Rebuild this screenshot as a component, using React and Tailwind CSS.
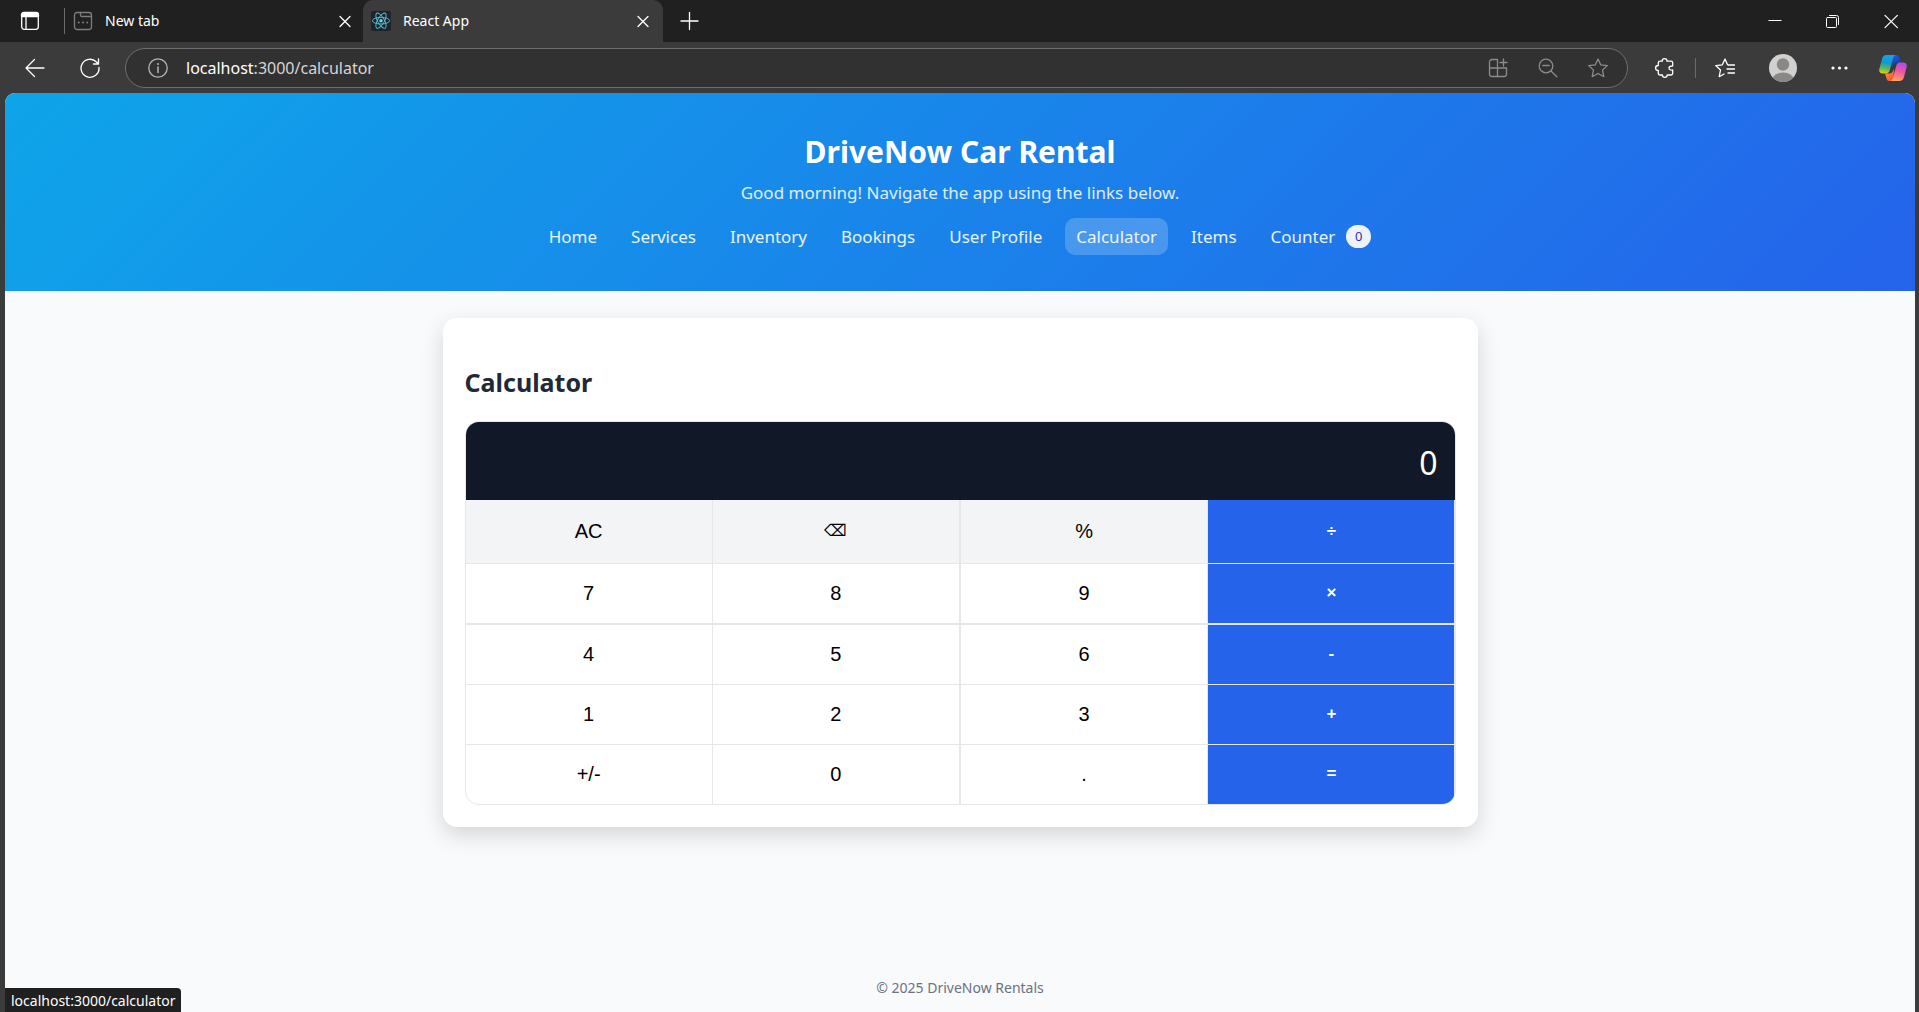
import React from "react";

const ui = "font-['Noto_Sans','Open_Sans',sans-serif]";

function Svg({ size = 20, children, className = "", ...rest }) {
  return (
    <svg
      width={size}
      height={size}
      viewBox="0 0 20 20"
      fill="none"
      stroke="currentColor"
      strokeWidth="1.3"
      strokeLinecap="round"
      strokeLinejoin="round"
      className={className}
      aria-hidden="true"
      {...rest}
    >
      {children}
    </svg>
  );
}

const CloseIcon = () => (
  <Svg>
    <path d="M5 5.500l10 10M15 5.500l-10 10" />
  </Svg>
);

const ReactLogo = () => (
  <svg width="20" height="20" viewBox="0 0 20 20" fill="none" stroke="#58c4dc" strokeWidth="0.9" aria-hidden="true">
    <rect width="20" height="20" rx="2" fill="#20232a" stroke="none" />
    <circle cx="10" cy="9.7" r="1.7" fill="#61dafb" stroke="none" />
    <ellipse cx="10" cy="9.7" rx="8.6" ry="3.3" />
    <ellipse cx="10" cy="9.7" rx="8.6" ry="3.3" transform="rotate(60 10 9.7)" />
    <ellipse cx="10" cy="9.7" rx="8.6" ry="3.3" transform="rotate(120 10 9.7)" />
  </svg>
);

const CopilotLogo = () => (
  <svg width="28" height="26" viewBox="0 0 28 26" aria-hidden="true">
    <defs>
      <linearGradient id="cpLeft" x1="8" y1="0" x2="5" y2="19" gradientUnits="userSpaceOnUse">
        <stop offset="0" stopColor="#14a4ef" />
        <stop offset="0.4" stopColor="#1496d6" />
        <stop offset="0.7" stopColor="#5cb85a" />
        <stop offset="1" stopColor="#f5d000" />
      </linearGradient>
      <linearGradient id="cpRight" x1="24" y1="7" x2="18" y2="26" gradientUnits="userSpaceOnUse">
        <stop offset="0" stopColor="#a04df0" />
        <stop offset="0.5" stopColor="#f0569b" />
        <stop offset="1" stopColor="#ffa35c" />
      </linearGradient>
      <linearGradient id="cpTop" x1="14" y1="0" x2="20" y2="8" gradientUnits="userSpaceOnUse">
        <stop offset="0" stopColor="#1f5fd8" />
        <stop offset="1" stopColor="#1040c0" />
      </linearGradient>
      <linearGradient id="cpBottom" x1="8" y1="18" x2="14" y2="26" gradientUnits="userSpaceOnUse">
        <stop offset="0" stopColor="#ff8a2a" />
        <stop offset="1" stopColor="#f04a4a" />
      </linearGradient>
    </defs>
    <path d="M14 0h3.400c1.700 0 2.600 1 3.100 2.600L22 7.400h-4.500c-1.800 0-2.900 1-3.400 2.500L13 12z" fill="url(#cpTop)" />
    <path d="M14 26h-3.400c-1.700 0-2.600-1-3.100-2.600L6 18.500h4.500c1.800 0 2.900-1 3.400-2.500L15 14z" fill="url(#cpBottom)" />
    <path d="M7.500 0H17c-1.500 0-2.300 1.200-2.800 2.700L10.800 15c-.6 2.200-1.700 3.600-3.800 3.600H3.500C.8 18.600-.3 16.600.4 13.800L3 4C3.700 1.500 5.200 0 7.500 0z" fill="url(#cpLeft)" />
    <path d="M20.500 26H11c1.500 0 2.300-1.200 2.800-2.700L17.200 11c.6-2.200 1.700-3.600 3.800-3.600h3.500c2.700 0 3.800 2 3.100 4.800L25 22c-.7 2.500-2.200 4-4.500 4z" fill="url(#cpRight)" />
  </svg>
);

function IconButton({ label, className = "", children }) {
  return (
    <button type="button" aria-label={label} className={`flex items-center justify-center ${className}`}>
      {children}
    </button>
  );
}

function TabStrip() {
  return (
    <div className="flex h-[42px] items-center bg-[#202020] text-white">
      <IconButton label="Tab actions" className="w-[60px]">
        <Svg>
          <rect x="1.700" y="1.700" width="16.600" height="16.600" rx="2.500" />
          <path d="M1.500 5.500V4A2.500 2.500 0 0 1 4 1.500h12A2.500 2.500 0 0 1 18.500 4v1.500z" fill="currentColor" />
          <path d="M6 6v12" />
        </Svg>
      </IconButton>
      <div className="flex h-full w-[303px] items-center gap-3 pr-2">
        <div className="ml-1 h-[26px] w-px bg-[#6b6b6b]" />
        <Svg size={20} className="-ml-1 text-[#7d7d7d]">
          <rect x="1.500" y="1.500" width="17" height="17" rx="2.500" />
          <path d="M7.500 1.500v2.700c0 .8.500 1.300 1.300 1.300h9.700" />
          <path d="M5.700 11.500h.1M10 11.500h.1M14.200 11.500h.1" strokeWidth="1.900" />
        </Svg>
        <span className="flex-1 text-[14px] leading-5">New tab</span>
        <IconButton label="Close New tab">
          <CloseIcon />
        </IconButton>
      </div>
      <div className="flex h-full w-[300px] items-center gap-3 rounded-t-[10px] bg-[#3b3b3b] pr-[10px] pl-2">
        <ReactLogo />
        <span className="flex-1 text-[14px] leading-5">React App</span>
        <IconButton label="Close React App">
          <CloseIcon />
        </IconButton>
      </div>
      <IconButton label="New tab" className="ml-4">
        <Svg>
          <path d="M10.500 1.500v17M2 10h17" />
        </Svg>
      </IconButton>
      <div className="ml-auto flex">
        <IconButton label="Minimize" className="w-[58px]">
          <Svg strokeWidth="1">
            <path d="M4.500 9.500h13" strokeLinecap="butt" />
          </Svg>
        </IconButton>
        <IconButton label="Restore" className="w-[58px]">
          <Svg strokeWidth="1">
            <rect x="4.500" y="6.500" width="10" height="10" rx="1" />
            <path d="M7.500 4.500h7a2 2 0 0 1 2 2v7" />
          </Svg>
        </IconButton>
        <IconButton label="Close window" className="w-[58px]">
          <Svg strokeWidth="1.200">
            <path d="M5 4.300l12.400 12.400M17.400 4.300L5 16.700" />
          </Svg>
        </IconButton>
      </div>
    </div>
  );
}

function Toolbar() {
  return (
    <div className="flex h-[51px] items-center bg-[#3b3b3b] text-white">
      <IconButton label="Back" className="ml-[25px]">
        <Svg>
          <path d="M19 10H1M9.500 1.500L1 10l8.500 8.500" />
        </Svg>
      </IconButton>
      <IconButton label="Refresh" className="ml-[35px]">
        <Svg>
          <path d="M19 9.500A9 9 0 1 1 16.500 4L18.500 6M18.500 1v5h-5" />
        </Svg>
      </IconButton>
      <div className="ml-[25px] flex h-10 flex-1 items-center rounded-full border border-[#6e6e6e] bg-[#313131] pr-[19px] pl-[22px] text-[#8c8c8c]">
        <IconButton label="Site information" className="text-[#b5b5b5]">
          <Svg>
            <circle cx="10" cy="10" r="9.200" />
            <path d="M10 9v5.500" strokeWidth="1.500" />
            <path d="M10 6h.01" strokeWidth="2" />
          </Svg>
        </IconButton>
        <div className="ml-[18px] flex-1 text-[16px] leading-6">
          <span className="text-white">localhost</span>
          <span className="text-[#d6d6d6]">:3000/calculator</span>
        </div>
        <div className="flex gap-[30px]">
          <IconButton label="App available">
            <Svg>
              <path d="M9.500 1.500H4A2.500 2.500 0 0 0 1.500 4v12A2.500 2.500 0 0 0 4 18.500h12a2.500 2.500 0 0 0 2.500-2.500v-6H1.500M9.500 1.500v17M15.500 1v7M12 4.500h7" />
            </Svg>
          </IconButton>
          <IconButton label="Zoom">
            <Svg>
              <circle cx="8" cy="8" r="6.800" />
              <path d="M13 13l5.800 5.800M4.800 7.500h6.400" />
            </Svg>
          </IconButton>
          <IconButton label="Add to favorites">
            <Svg>
              <path d="M10 1l2.700 5.800 6.600.8-4.800 4.500 1.300 6.600L10 15.500l-5.800 3.200 1.300-6.600L.7 7.600l6.600-.8z" />
            </Svg>
          </IconButton>
        </div>
      </div>
      <IconButton label="Extensions" className="ml-[27px]">
        <Svg>
          <path d="M5 3.200h2.200c0-1.600.8-2.500 2.300-2.500s2.500.9 2.500 2.500h4c1 0 1.700.7 1.700 1.700V8c-2 0-3.700.2-3.700 2s1.700 2.200 3.700 2v3.300c0 1-.7 1.700-1.700 1.700h-3.800c0 1.400-.9 2.300-2.400 2.300S7.400 18.400 7.400 17H5c-1 0-1.700-.7-1.700-1.700v-2.800C1.700 12.500.6 11.500.6 10s1.100-2.500 2.700-2.500V4.900c0-1 .7-1.700 1.700-1.700z" />
        </Svg>
      </IconButton>
      <div className="ml-5 h-5 w-px bg-[#6b6b6b]" />
      <IconButton label="Favorites" className="ml-[19px]">
        <Svg>
          <path d="M12.300 6.300L10 1 7.300 6.800l-6.600.8L5.500 12l-1.300 6.700L9 16M13 7h6.500M12 11h7.500M13 15h6.500" />
        </Svg>
      </IconButton>
      <IconButton label="Profile" className="ml-[34px]">
        <svg width="28" height="28" viewBox="0 0 28 28" aria-hidden="true">
          <defs>
            <clipPath id="avatar">
              <circle cx="14" cy="14" r="14" />
            </clipPath>
          </defs>
          <g clipPath="url(#avatar)">
            <rect width="28" height="28" fill="#d2d0ce" />
            <circle cx="14" cy="10.500" r="6.200" fill="#8a8886" />
            <ellipse cx="14" cy="25.500" rx="10.500" ry="7" fill="#8a8886" />
          </g>
        </svg>
      </IconButton>
      <IconButton label="Settings and more" className="ml-[33px]">
        <Svg fill="currentColor" stroke="none">
          <circle cx="3" cy="10" r="1.600" />
          <circle cx="9.500" cy="10" r="1.600" />
          <circle cx="16" cy="10" r="1.600" />
        </Svg>
      </IconButton>
      <IconButton label="Copilot" className="mr-3 ml-[29px]">
        <CopilotLogo />
      </IconButton>
    </div>
  );
}

const links = ["Home", "Services", "Inventory", "Bookings", "User Profile", "Calculator", "Items"];

function Header() {
  return (
    <header className="flex h-[198px] flex-col items-center bg-linear-[135deg] from-[#0ea5e9] to-[#2563eb] pt-[37px] text-white">
      <h1 className="text-[30px] leading-[44px] font-bold">DriveNow Car Rental</h1>
      <p className="mt-[3px] text-[17px] leading-8 text-white/85">Good morning! Navigate the app using the links below.</p>
      <nav className="mt-[9px] flex gap-3 text-[17px] leading-[37px] text-white/90">
        {links.map((name) => (
          <a
            key={name}
            href="#"
            className={name === "Calculator" ? "rounded-[10px] bg-white/20 px-[11px]" : "rounded-[10px] px-[11px]"}
          >
            {name}
          </a>
        ))}
        <a href="#" className="flex items-center px-[11px]">
          Counter
          <span className="ml-[11px] flex h-[23px] w-[25px] items-center justify-center rounded-full bg-[#eef2ff] text-[13px] text-[#3730a3]">
            0
          </span>
        </a>
      </nav>
    </header>
  );
}

const rows = [
  ["AC", "⌫", "%", "÷"],
  ["7", "8", "9", "×"],
  ["4", "5", "6", "-"],
  ["1", "2", "3", "+"],
  ["+/-", "0", ".", "="],
];

function keyStyle(r, c) {
  if (c === 3) return "bg-[#2563eb] text-[17px] font-bold text-white";
  if (r === 0 && c === 1) return "bg-[#f3f4f6] text-[16px] text-black";
  if (r === 0) return "bg-[#f3f4f6] text-[20px] text-black";
  return "bg-white text-[20px] text-black";
}

function Calculator() {
  return (
    <section className="mx-auto mt-[27px] w-full max-w-[1035px] rounded-[14px] bg-white p-[22px] shadow-[0_8px_22px_rgba(0,0,0,0.15)]">
      <h2 className="mt-6 mb-5 text-[25px] leading-[37px] font-bold text-[#1f2937]">Calculator</h2>
      <div className="overflow-hidden rounded-[14px] border border-[#e5e7eb] bg-[#e5e7eb]">
        <output className="flex h-[78px] items-center justify-end bg-[#111827] px-[17px] pt-1 text-[32px] text-white">
          0
        </output>
        <div className="grid grid-cols-[246fr_247fr_246fr_246fr] grid-rows-[63px_60px_59px_59px_59px] gap-px font-['Liberation_Sans',Arial,sans-serif]">
          {rows.map((row, r) =>
            row.map((key, c) => (
              <button
                key={key}
                type="button"
                className={`pb-[2px] ${keyStyle(r, c)} ${r === 1 ? "border-b border-[#e5e7eb]" : ""} ${c === 1 ? "border-r border-r-[#e5e7eb]" : ""}`}
              >
                {key}
              </button>
            ))
          )}
        </div>
      </div>
    </section>
  );
}

export default function App() {
  return (
    <div className={`relative flex min-h-screen flex-col bg-[#3b3b3b] ${ui}`}>
      <TabStrip />
      <Toolbar />
      <div className="mr-1 ml-[5px] flex flex-1 flex-col overflow-hidden rounded-t-[10px] bg-[#f9fafb]">
        <Header />
        <main className="flex-1">
          <Calculator />
        </main>
        <footer className="pb-3 text-center text-[14px] leading-6 text-[#6b7280]">© 2025 DriveNow Rentals</footer>
      </div>
      <div className="absolute bottom-0 left-[5px] h-6 rounded-tr-[4px] bg-[#202020] px-[6px] text-[14px] leading-[26px] text-white">
        localhost:3000/calculator
      </div>
    </div>
  );
}
